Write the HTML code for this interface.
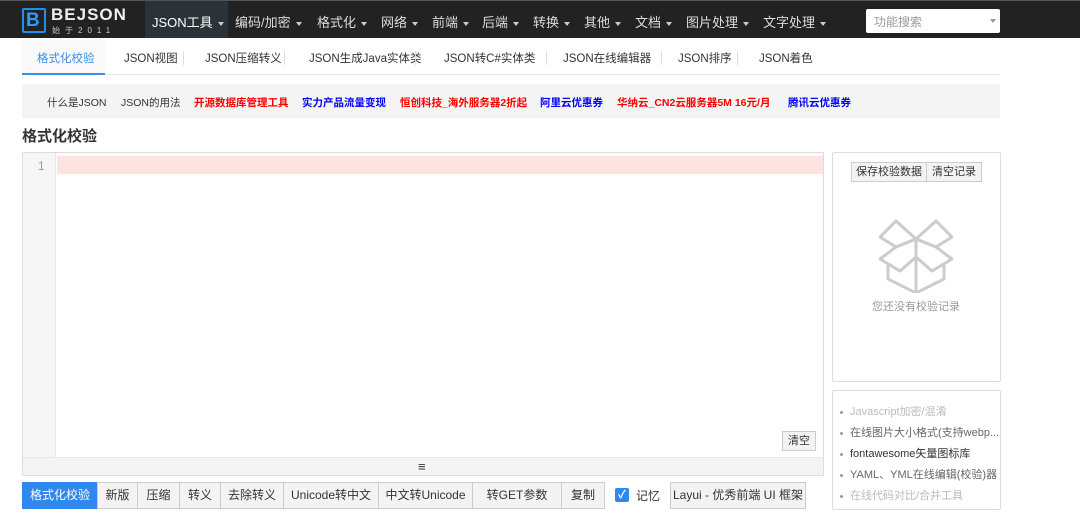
<!DOCTYPE html>
<html><head><meta charset="utf-8"><style>
*{box-sizing:border-box;margin:0;padding:0}
body{width:1080px;height:514px;overflow:hidden;background:#fff;font-family:"Liberation Sans","Noto Sans CJK SC",sans-serif;font-size:12px;color:#333;position:relative}
.a{position:absolute}
.nav{left:0;top:0;width:1080px;height:38px;background:#222;border-top:1px solid #555}
.nav span{position:absolute;top:11px;color:#ddd;font-size:13px;white-space:nowrap}
.caret{display:inline-block;width:0;height:0;border-left:3px solid transparent;border-right:3px solid transparent;border-top:4px solid #ccc;margin-left:5px;vertical-align:middle}
.tab{position:absolute;top:50px;font-size:11.5px;color:#333;white-space:nowrap}
.sep{position:absolute;top:51px;width:1px;height:14px;background:#ddd}
.lk{position:absolute;top:95px;font-size:10.5px;white-space:nowrap}
.btn{position:absolute;top:482px;height:27px;border:1px solid #ccc;background:#f3f3f3;font-size:12px;color:#333;text-align:center;line-height:25px;white-space:nowrap}
.li{position:absolute;left:840px;font-size:11px;white-space:nowrap}
.li:before{content:"";display:inline-block;width:3px;height:3px;background:#999;border-radius:50%;margin-right:7px;vertical-align:middle}
</style></head><body>
<div class="a nav">
 <div class="a" style="left:22px;top:7px;width:24px;height:25px;border:2px solid #1e8ff0;border-radius:2px"></div>
 <div class="a" style="left:26px;top:9px;color:#2a9bff;font-weight:bold;font-size:19px;line-height:21px">B</div>
 <div class="a" style="left:51px;top:4px;color:#eee;font-weight:bold;font-size:17px;letter-spacing:1px">BEJSON</div>
 <div class="a" style="left:52px;top:24px;color:#ccc;font-size:8px;letter-spacing:5px">始于2011</div>
 <div class="a" style="left:145px;top:0;width:83px;height:37px;background:#2c3338"></div>
 <span style="left:152px;color:#fff">JSON工具<i class="caret"></i></span>
 <span style="left:235px">编码/加密<i class="caret"></i></span>
 <span style="left:317px">格式化<i class="caret"></i></span>
 <span style="left:381px">网络<i class="caret"></i></span>
 <span style="left:432px">前端<i class="caret"></i></span>
 <span style="left:482px">后端<i class="caret"></i></span>
 <span style="left:533px">转换<i class="caret"></i></span>
 <span style="left:584px">其他<i class="caret"></i></span>
 <span style="left:635px">文档<i class="caret"></i></span>
 <span style="left:686px">图片处理<i class="caret"></i></span>
 <span style="left:763px">文字处理<i class="caret"></i></span>
 <div class="a" style="left:866px;top:8px;width:134px;height:24px;background:#fff;border-radius:2px"><span style="left:8px;top:4px;color:#999;font-size:12px">功能搜索</span><i class="caret" style="position:absolute;right:4px;top:10px;border-top-color:#999"></i></div>
</div>
<div class="a" style="left:22px;top:74px;width:978px;height:1px;background:#e6e6e6"></div>
<div class="a" style="left:22px;top:40px;width:83px;height:33px;background:#f9f9f9"></div>
<div class="a" style="left:22px;top:73px;width:83px;height:2px;background:#3a8ee6"></div>
<div class="tab" style="left:37px;color:#3a8ee6">格式化校验</div>
<div class="tab" style="left:124px">JSON视图</div><div class="sep" style="left:183px"></div>
<div class="tab" style="left:205px">JSON压缩转义</div><div class="sep" style="left:284px"></div>
<div class="tab" style="left:309px">JSON生成Java实体类</div><div class="sep" style="left:415px"></div>
<div class="tab" style="left:444px">JSON转C#实体类</div><div class="sep" style="left:546px"></div>
<div class="tab" style="left:563px">JSON在线编辑器</div><div class="sep" style="left:661px"></div>
<div class="tab" style="left:678px">JSON排序</div><div class="sep" style="left:737px"></div>
<div class="tab" style="left:759px">JSON着色</div>
<div class="a" style="left:22px;top:84px;width:978px;height:34px;background:#f4f4f4"></div>
<div class="lk" style="left:47px;color:#333">什么是JSON</div>
<div class="lk" style="left:121px;color:#333">JSON的用法</div>
<div class="lk" style="left:194px;color:#f00;font-weight:bold">开源数据库管理工具</div>
<div class="lk" style="left:302px;color:#00f;font-weight:bold">实力产品流量变现</div>
<div class="lk" style="left:400px;color:#f00;font-weight:bold">恒创科技_海外服务器2折起</div>
<div class="lk" style="left:540px;color:#00f;font-weight:bold">阿里云优惠券</div>
<div class="lk" style="left:617px;color:#f00;font-weight:bold">华纳云_CN2云服务器5M 16元/月</div>
<div class="lk" style="left:788px;color:#00f;font-weight:bold">腾讯云优惠券</div>
<div class="a" style="left:22px;top:125px;font-size:15px;font-weight:bold;color:#333">格式化校验</div>
<div class="a" style="left:22px;top:152px;width:802px;height:324px;border:1px solid #ddd"></div>
<div class="a" style="left:23px;top:153px;width:33px;height:304px;background:#f6f6f6;border-right:1px solid #e8e8e8"></div>
<div class="a" style="left:38px;top:159px;color:#999;font-size:12px">1</div>
<div class="a" style="left:57px;top:156px;width:766px;height:18px;background:#fde4e1"></div>
<div class="a" style="left:23px;top:457px;width:800px;height:18px;background:#f4f4f4;border-top:1px solid #e6e6e6"></div>
<div class="a" style="left:418px;top:459px;font-size:13px;font-weight:bold;color:#333">≡</div>
<div class="a" style="left:782px;top:431px;width:34px;height:20px;border:1px solid #ccc;background:#f3f3f3;text-align:center;line-height:18px;font-size:11px">清空</div>
<div class="a" style="left:832px;top:152px;width:169px;height:230px;border:1px solid #ddd;border-radius:2px"></div>
<div class="a" style="left:851px;top:162px;width:76px;height:20px;border:1px solid #ccc;background:#f3f3f3;text-align:center;line-height:18px;font-size:11px">保存校验数据</div>
<div class="a" style="left:926px;top:162px;width:56px;height:20px;border:1px solid #ccc;background:#f3f3f3;text-align:center;line-height:18px;font-size:11px">清空记录</div>
<svg class="a" style="left:876px;top:217px" width="80" height="76" viewBox="0 0 80 76" fill="none" stroke="#ccc" stroke-width="3" stroke-linejoin="round">
<path d="M40 22 L20 4 L4 20 L20 30 Z"/><path d="M40 22 L60 4 L76 20 L60 30 Z"/>
<path d="M40 22 L20 30 L4 42 L24 54 L40 40 Z"/><path d="M40 22 L60 30 L76 42 L56 54 L40 40 Z"/>
<path d="M12 48 V62 L40 76 L68 62 V48"/><path d="M40 40 V76"/></svg>
<div class="a" style="left:872px;top:298px;color:#999;font-size:11px">您还没有校验记录</div>
<div class="a" style="left:832px;top:390px;width:169px;height:120px;border:1px solid #ddd;border-radius:2px"></div>
<div class="li" style="top:403px;color:#bbb">Javascript加密/混淆</div>
<div class="li" style="top:424px;color:#666">在线图片大小格式(支持webp...</div>
<div class="li" style="top:445px;color:#333">fontawesome矢量图标库</div>
<div class="li" style="top:466px;color:#666">YAML、YML在线编辑(校验)器</div>
<div class="li" style="top:487px;color:#bbb">在线代码对比/合并工具</div>
<div class="btn" style="left:22px;width:76px;background:#2f87f0;border-color:#2f87f0;color:#fff">格式化校验</div>
<div class="btn" style="left:97px;width:41px">新版</div>
<div class="btn" style="left:137px;width:43px">压缩</div>
<div class="btn" style="left:179px;width:42px">转义</div>
<div class="btn" style="left:220px;width:64px">去除转义</div>
<div class="btn" style="left:283px;width:96px">Unicode转中文</div>
<div class="btn" style="left:378px;width:95px">中文转Unicode</div>
<div class="btn" style="left:472px;width:90px">转GET参数</div>
<div class="btn" style="left:561px;width:44px">复制</div>
<div class="a" style="left:615px;top:488px;width:14px;height:14px;background:#2f87f0;border-radius:2px;color:#fff;font-size:11px;line-height:14px;text-align:center;font-weight:bold">✓</div>
<div class="a" style="left:636px;top:487px;font-size:12px">记忆</div>
<div class="btn" style="left:670px;width:136px">Layui - 优秀前端 UI 框架</div>
</body></html>
